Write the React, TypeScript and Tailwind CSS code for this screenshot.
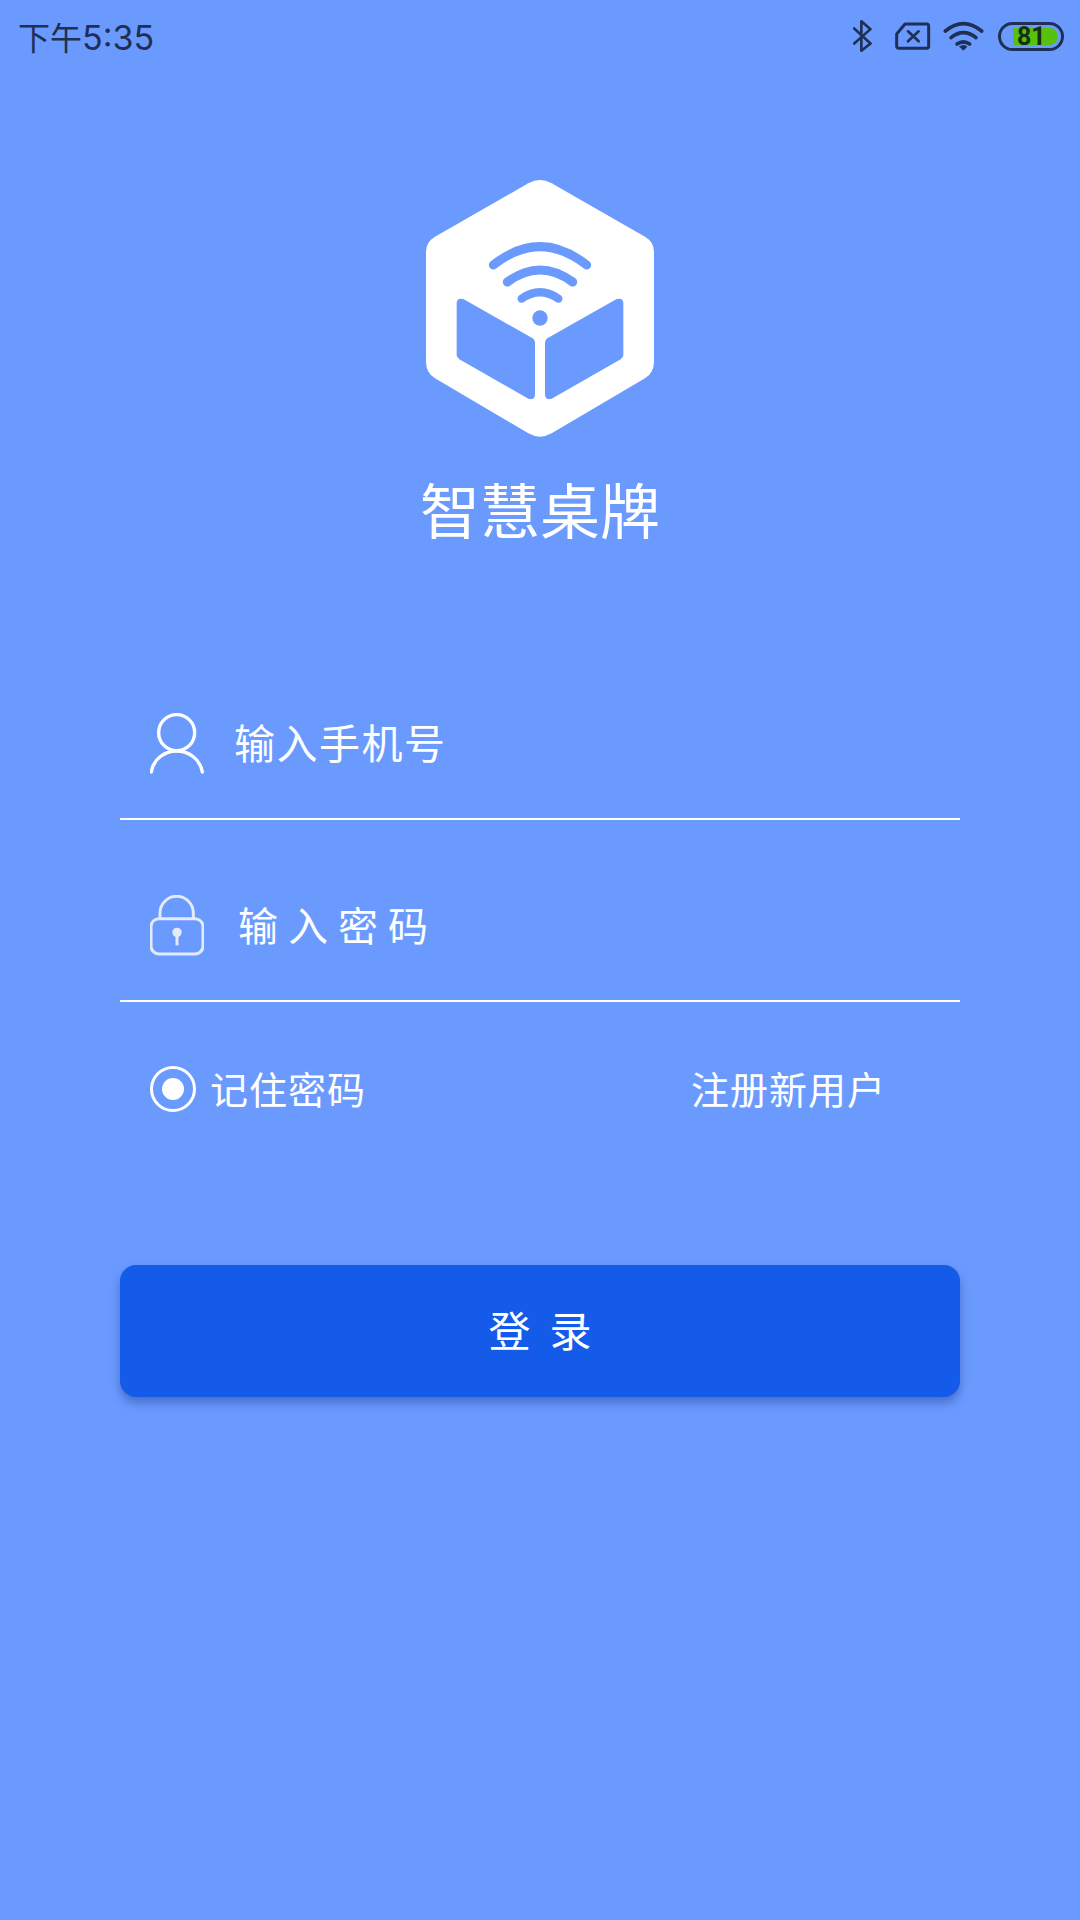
const font = "[font-family:'Noto_Sans_CJK_SC',sans-serif]";

function Logo() {
  return (
    <svg width="280" height="290" viewBox="0 0 840 870" className="block">
      <path
        d="M385 70 Q420 50 455 70 L735 230 Q762 246 762 275 V605 Q762 638 735 655 L455 820 Q420 840 385 820 L105 655 Q78 638 78 605 V275 Q78 246 105 230 Z"
        fill="#fff"
      />
      <g fill="none" stroke="#6b9aff" strokeLinecap="round">
        <path d="M280 315 Q420 205 560 315" strokeWidth="27" />
        <path d="M322 366 Q420 294 518 366" strokeWidth="27" />
        <path d="M365 416 Q420 378 475 416" strokeWidth="25" />
      </g>
      <circle cx="420" cy="474" r="23" fill="#6b9aff" />
      <path
        d="M190 417 L398 535 Q405 540 405 548 V703 Q405 722 385 716 L178 598 Q170 592 170 585 V430 Q170 412 190 417 Z"
        fill="#6b9aff"
      />
      <path
        d="M650 417 L442 535 Q435 540 435 548 V703 Q435 722 455 716 L662 598 Q670 592 670 585 V430 Q670 412 650 417 Z"
        fill="#6b9aff"
      />
    </svg>
  );
}

function UserIcon() {
  return (
    <svg width="54" height="62" viewBox="120 68 162 186" className="block shrink-0" fill="none" stroke="#fff" strokeWidth="10" strokeLinecap="round">
      <circle cx="200" cy="127" r="54" />
      <path d="M124 245 C130 205 165 182 200 182 C235 182 270 205 277 245" />
    </svg>
  );
}

function LockIcon() {
  return (
    <svg width="54" height="62" viewBox="120 614 162 186" className="block shrink-0" fill="none" stroke="#e3ebfb" strokeWidth="9">
      <rect x="123" y="685" width="156" height="106" rx="24" />
      <path d="M150 685 V668 a50 50 0 0 1 100 0 V685" />
      <circle cx="201" cy="726" r="14" fill="#e3ebfb" stroke="none" />
      <path d="M201 730 V765" />
    </svg>
  );
}

function StatusIcons() {
  return (
    <div className="flex items-center">
      <svg width="20" height="32" viewBox="97 60 60 98" fill="none" stroke="#1f2f55" strokeWidth="8" strokeLinecap="round" strokeLinejoin="round" className="block">
        <path d="M100 86 L150 132 L122 154 V64 L150 88 L100 132" />
      </svg>
      <svg width="36" height="28" viewBox="225 64 108 84" fill="none" stroke="#1f2f55" strokeWidth="9" strokeLinejoin="round" strokeLinecap="round" className="ml-[22px] block">
        <path d="M230 100 L255 70 H320 Q326 70 326 76 V136 Q326 143 320 143 H237 Q230 143 230 136 Z" />
        <path d="M264 92 L296 122 M296 92 L264 122" strokeWidth="8" />
      </svg>
      <svg width="41" height="30" viewBox="370 62 123 90" fill="none" stroke="#1f2f55" strokeLinecap="round" className="ml-[12px] block">
        <path d="M377 92 Q431 48 486 92" strokeWidth="11" />
        <path d="M394 112 Q431 82 469 112" strokeWidth="11" />
        <path d="M412 131 Q431 118 450 131" strokeWidth="11" />
        <path d="M420 139 L431 150 L442 139 Q431 130 420 139 Z" fill="#1f2f55" strokeWidth="2" />
      </svg>
      <div className="relative ml-[14px] flex h-[29px] w-[66px] items-center rounded-full border-[3px] border-[#1f2f55] pl-[12px]">
        <div className="h-[17px] w-[45px] rounded-r-full bg-[#56c20f]" />
        <span className="absolute left-[16px] top-[-4px] text-[25px] leading-[32px] font-bold text-[#173012] [font-family:'Roboto',sans-serif]">81</span>
      </div>
    </div>
  );
}

export default function App() {
  return (
    <main className={`flex min-h-[1920px] w-[1080px] flex-col bg-[#6b9aff] text-white ${font}`}>
      {/* Status bar */}
      <div className="flex h-[72px] items-center justify-between pl-[18px] pr-[16px]">
        <span className="mt-[4px] text-[32px] leading-[40px] text-[#1f2f55] [font-family:'Inter','Noto_Sans_CJK_SC',sans-serif]">
          下午<span className="text-[34px]">5:35</span>
        </span>
        <StatusIcons />
      </div>

      {/* Logo */}
      <div className="mt-[88px] flex justify-center">
        <Logo />
      </div>
      <h1 className="mt-[18px] text-center text-[60px] leading-[80px] font-normal">智慧桌牌</h1>

      {/* Form */}
      <div className="mt-[127px] px-[120px]">
        <div className="flex h-[145px] items-center border-b-2 border-white pb-[5px] pl-[30px]">
          <UserIcon />
          <span className="mb-[6px] ml-[30px] text-[41px] leading-[56px] tracking-[1.5px]">输入手机号</span>
        </div>
        <div className="mt-[40px] flex h-[142px] items-center border-b-2 border-white pb-[8px] pl-[30px]">
          <LockIcon />
          <span className="mb-[4px] ml-[34px] text-[40px] leading-[56px] tracking-[10px]">输入密码</span>
        </div>

        <div className="mt-[64px] flex items-center justify-between pl-[30px] pr-[74px]">
          <div className="flex items-center">
            <span className="flex h-[46px] w-[46px] items-center justify-center rounded-full border-[3px] border-white">
              <span className="h-[22px] w-[22px] rounded-full bg-white" />
            </span>
            <span className="mb-[2px] ml-[14px] text-[38px] leading-[44px] tracking-[1px]">记住密码</span>
          </div>
          <span className="mb-[2px] text-[38px] leading-[44px] tracking-[1px]">注册新用户</span>
        </div>

        <button className="mt-[153px] flex h-[132px] w-full items-center justify-center rounded-[16px] bg-[#155be9] pb-[5px] pl-[19px] text-[42px] tracking-[19px] text-white shadow-[0_6px_10px_rgba(20,50,120,0.4)]">
          登录
        </button>
      </div>
    </main>
  );
}
